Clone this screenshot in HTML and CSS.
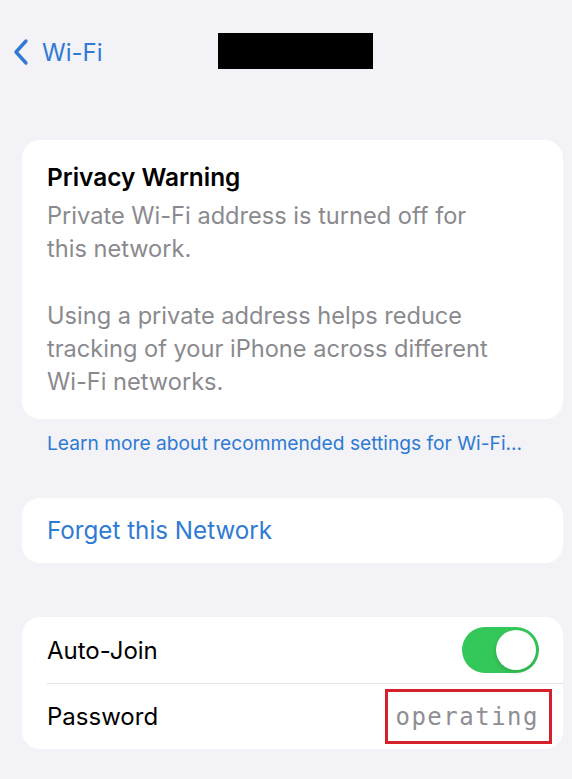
FILE: index.html
```html
<!DOCTYPE html>
<html>
<head>
<meta charset="utf-8">
<link rel="stylesheet" href="styles.css">
</head>
<body>
<div class="screen">
  <header class="nav">
    <a class="back">
      <svg class="chev" width="18" height="28" viewBox="0 0 18 28"><path d="M14 3 L4 14 L14 25" fill="none" stroke="#2f7bd3" stroke-width="3.4" stroke-linecap="round" stroke-linejoin="round"/></svg>
      <span class="back-label">Wi-Fi</span>
    </a>
    <div class="redact"></div>
  </header>

  <section class="card warning">
    <h2 class="warn-title">Privacy Warning</h2>
    <p class="warn-text">Private Wi-Fi address is turned off for this network.</p>
    <p class="warn-text">Using a private address helps reduce tracking of your iPhone across different Wi-Fi networks.</p>
  </section>
  <p class="footer-link">Learn more about recommended settings for Wi-Fi...</p>

  <section class="card single">
    <div class="row action">Forget this Network</div>
  </section>

  <section class="card list">
    <div class="row">
      <span class="label">Auto-Join</span>
      <span class="toggle"><span class="knob"></span></span>
    </div>
    <div class="row">
      <span class="label">Password</span>
      <span class="pw">operating</span>
    </div>
  </section>
</div>
</body>
</html>
```

FILE: styles.css
```css
html, body {
  margin: 0;
  padding: 0;
  background: #f2f2f7;
}
body {
  font-family: "Inter", "Roboto", "Liberation Sans", sans-serif;
  width: 572px;
  height: 779px;
  overflow: hidden;
}
.screen {
  padding: 0 9px 0 22px;
}
.nav {
  height: 104px;
  display: flex;
  align-items: center;
  margin-left: -10px;
}
.back {
  display: flex;
  align-items: center;
  gap: 12px;
  color: #2f7bd3;
}
.chev {
  display: block;
}
.back-label {
  font-size: 24px;
}
.redact {
  width: 155px;
  height: 36px;
  background: #000;
  margin-left: 116px;
  margin-top: -2px;
}
.card {
  background: #fff;
  border-radius: 18px;
}
.warning {
  margin-top: 36px;
  padding: 21px 51px 21px 25px;
}
.warn-title {
  margin: 0 0 6px;
  font-size: 24.4px;
  font-weight: 600;
  line-height: 32px;
  color: #000;
}
.warn-text {
  margin: 0;
  font-size: 23.6px;
  line-height: 33px;
  color: #8a8a8e;
}
.warn-text + .warn-text {
  margin-top: 34px;
}
.footer-link {
  margin: 12px 0 0 25px;
  font-size: 19.2px;
  line-height: 25px;
  color: #2f7bd3;
}
.single {
  margin-top: 42px;
}
.row {
  display: flex;
  align-items: center;
  justify-content: space-between;
  height: 65px;
  padding: 0 24px 0 25px;
}
.action {
  color: #2f7bd3;
  font-size: 24.2px;
}
.list {
  margin-top: 54px;
}
.list .row:first-child {
  height: 66px;
}
.list .row + .row {
  border-top: 1px solid #e3e3e6;
  margin-left: 25px;
  padding-left: 0;
}
.label {
  font-size: 24px;
  color: #000;
}
.toggle {
  width: 77px;
  height: 46px;
  border-radius: 23px;
  background: #34c759;
  position: relative;
}
.knob {
  position: absolute;
  right: 3px;
  top: 3px;
  width: 40px;
  height: 40px;
  border-radius: 50%;
  background: #fff;
  box-shadow: 0 2px 4px rgba(0,0,0,0.15);
}
.pw {
  font-family: "DejaVu Sans Mono", "Liberation Mono", monospace;
  font-size: 24px;
  letter-spacing: 1.5px;
  line-height: 30px;
  color: #8e8e93;
  border: 3px solid #d3202b;
  padding: 10px 10px 9px 7px;
  margin-right: -13px;
}
```
